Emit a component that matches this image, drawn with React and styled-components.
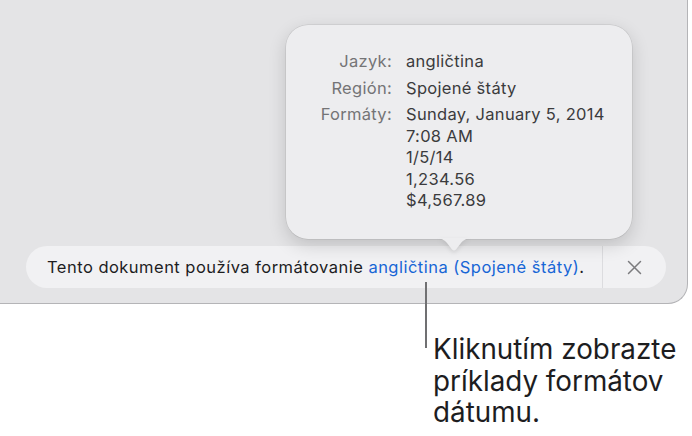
import React from 'react'
import styled, { createGlobalStyle } from 'styled-components'

const GlobalStyle = createGlobalStyle`
  body {
    margin: 0;
    background: #ffffff;
    font-family: Inter, "Noto Sans", sans-serif;
    -webkit-font-smoothing: antialiased;
  }
`

const Page = styled.div`
  width: 692px;
  height: 436px;
  overflow: hidden;
`

const Window = styled.div`
  position: relative;
  width: 688px;
  height: 304px;
  box-sizing: border-box;
  background: #e4e4e6;
  border-right: 1px solid #b4b4b7;
  border-bottom: 1px solid #b4b4b7;
  border-bottom-right-radius: 20px;
  display: flex;
  align-items: flex-end;
  padding: 0 21px 15px 26px;
`

const Bar = styled.div`
  flex: 1;
  height: 42px;
  border-radius: 21px;
  background: #f1f1f3;
  display: flex;
  align-items: center;
  font-size: 16.5px;
  letter-spacing: 0.48px;
  color: #1d1d1f;
`

const Message = styled.div`
  flex: 1;
  padding-left: 21px;
  white-space: nowrap;
`

const Link = styled.span`
  color: #1766d6;
`

const Divider = styled.div`
  width: 1px;
  align-self: stretch;
  background: #dcdcdf;
`

const CloseButton = styled.div`
  width: 63px;
  display: flex;
  align-items: center;
  justify-content: center;
  color: #7b7b7e;
`

const Popover = styled.div`
  position: absolute;
  left: 286px;
  top: 25px;
  width: 346px;
  height: 214px;
  box-sizing: border-box;
  border-radius: 22px;
  background: #ededef;
  box-shadow: 0 0 0 0.5px rgba(0, 0, 0, 0.12), 0 6px 18px rgba(0, 0, 0, 0.16);
  padding-top: 26px;
  z-index: 2;
`

const Tail = styled.svg`
  position: absolute;
  left: 150px;
  bottom: -13px;
  filter: drop-shadow(0 2px 2px rgba(0, 0, 0, 0.1));
`

const Details = styled.div`
  display: grid;
  grid-template-columns: 106px 1fr;
  column-gap: 14px;
  row-gap: 5px;
  font-size: 16.5px;
  letter-spacing: 0.3px;
  line-height: 21.5px;
`

const Label = styled.div`
  text-align: right;
  color: #747476;
`

const Value = styled.div`
  color: #3b3b3d;
`

const Callout = styled.div`
  position: relative;
  padding: 30px 0 0 433px;
  font-size: 27.8px;
  line-height: 31.5px;
  color: #1d1d1f;
`

const Leader = styled.div`
  position: absolute;
  left: 425px;
  top: -22px;
  width: 2px;
  height: 66px;
  background: #707072;
  z-index: 3;
`

const formats = [
  'Sunday, January 5, 2014',
  '7:08 AM',
  '1/5/14',
  '1,234.56',
  '$4,567.89',
]

export default function App() {
  return (
    <Page>
      <GlobalStyle />
      <Window>
        <Popover>
          <Details>
            <Label>Jazyk:</Label>
            <Value>angličtina</Value>
            <Label>Región:</Label>
            <Value>Spojené štáty</Value>
            <Label>Formáty:</Label>
            <Value>
              {formats.map((line) => (
                <div key={line}>{line}</div>
              ))}
            </Value>
          </Details>
          <Tail width="36" height="14" viewBox="0 0 36 14">
            <path
              d="M0 0 H36 C31 0 28 1.5 25 5 L20.2 11.2 Q18 13.6 15.8 11.2 L11 5 C8 1.5 5 0 0 0 Z"
              fill="#ededef"
            />
          </Tail>
        </Popover>
        <Bar>
          <Message>
            Tento dokument používa formátovanie{' '}
            <Link>angličtina (Spojené štáty)</Link>.
          </Message>
          <Divider />
          <CloseButton>
            <svg width="15" height="15" viewBox="0 0 15 15">
              <path
                d="M1.5 1.5 L13.5 13.5 M13.5 1.5 L1.5 13.5"
                stroke="currentColor"
                strokeWidth="1.5"
                strokeLinecap="round"
              />
            </svg>
          </CloseButton>
        </Bar>
      </Window>
      <Callout>
        <Leader />
        Kliknutím zobrazte
        <br />
        príklady formátov
        <br />
        dátumu.
      </Callout>
    </Page>
  )
}
